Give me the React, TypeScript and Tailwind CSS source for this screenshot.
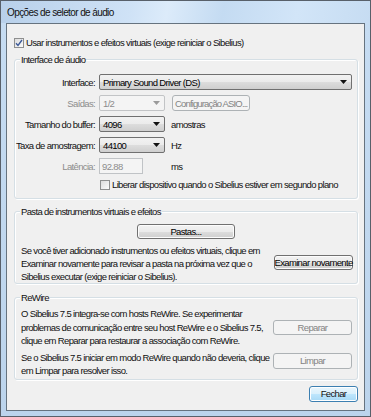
import React from "react";

const font = "font-['Liberation_Sans',Arial,sans-serif]";

const btn =
  "flex items-center justify-center whitespace-nowrap rounded-[3px] border border-[#707070] bg-[linear-gradient(#f2f2f2_0%,#ebebeb_50%,#dddddd_51%,#cfcfcf_100%)] shadow-[inset_0_0_0_1px_#fcfcfc] text-black";
const btnOff =
  "flex items-center justify-center whitespace-nowrap rounded-[3px] border border-[#adb2b5] bg-[#f4f4f4] text-[#838383]";

const Arrow = ({ off }: { off?: boolean }) => (
  <svg width="7" height="4" viewBox="0 0 7 4">
    <path d="M0 0h7L3.5 4z" fill={off ? "#9a9a9a" : "#111"} />
  </svg>
);

const Select = ({
  value,
  width,
  off,
}: {
  value: string;
  width: string;
  off?: boolean;
}) => (
  <div
    className={`flex h-[16px] items-center justify-between rounded-[2px] border pl-[3px] pr-[4px] ${width} ${
      off
        ? "border-[#c2c4c6] bg-[#f4f4f4] text-[#8d8d8d]"
        : "border-[#707070] bg-[linear-gradient(#f2f2f2_0%,#ebebeb_50%,#dddddd_51%,#cfcfcf_100%)] text-black"
    }`}
  >
    <span>{value}</span>
    <Arrow off={off} />
  </div>
);

const Check = ({ checked }: { checked?: boolean }) => (
  <div className="flex h-[10px] w-[10px] shrink-0 items-center justify-center border border-[#8e8f8f] bg-[linear-gradient(135deg,#dcdcdc,#fbfbfb)]">
    {checked && (
      <svg width="8" height="8" viewBox="0 0 8 8">
        <path d="M1 4.2l2 2.3L7 1" fill="none" stroke="#3d5a98" strokeWidth="1.4" />
      </svg>
    )}
  </div>
);

const Group = ({
  title,
  className,
  children,
}: {
  title: string;
  className: string;
  children: React.ReactNode;
}) => (
  <div
    className={`rounded-[3px] border border-[#d5dfe5] shadow-[inset_1px_1px_0_#fff,1px_1px_0_#fff] ${className}`}
  >
    <div className="-mt-[7px] ml-[5px] w-fit bg-[#f0f0f0] px-[1px] leading-[13px]">{title}</div>
    {children}
  </div>
);

const Row = ({ label, off, children }: { label: string; off?: boolean; children: React.ReactNode }) => (
  <div className="flex h-[16px] items-center gap-[4px]">
    <div className={`w-[80px] text-right ${off ? "text-[#8d8d8d]" : ""}`}>{label}</div>
    {children}
  </div>
);

export default function App() {
  return (
    <div
      className={`${font} flex h-[417px] w-[371px] flex-col whitespace-nowrap border border-[#58606a] bg-[#c3d9ef] text-[9.5px] leading-[13px] tracking-[-0.65px] text-[#111]`}
    >
      {/* title bar */}
      <div className="flex h-[22px] items-center bg-[linear-gradient(100deg,#b8d0ea_0%,#cfe2f6_35%,#dcebfa_45%,#c4dbf2_60%,#d2e5f8_80%,#c6dcf2_100%)] px-[6px] text-[10px] tracking-[-0.6px]">
        Opções de seletor de áudio
      </div>

      <div className="flex flex-1 flex-col bg-[linear-gradient(#c6dcf2,#bcd4ec)] px-[5px] pb-[5px]">
        <div className="flex flex-1 flex-col border border-[#66737f] bg-[#f0f0f0] pl-[7px] pr-[6px]">
          <div className="mt-[12px] flex h-[13px] items-center gap-[2px]">
            <Check checked />
            <span>Usar instrumentos e efeitos virtuais (exige reiniciar o Sibelius)</span>
          </div>

          <Group title="Interface de áudio" className="mt-[10px] pb-[7px]">
            <div className="mt-[8px] flex flex-col gap-[5px]">
              <Row label="Interface:">
                <Select value="Primary Sound Driver (DS)" width="w-[253px]" />
              </Row>
              <Row label="Saídas:" off>
                <Select value="1/2" width="w-[66px]" off />
                <div className={`${btnOff} ml-[3px] h-[16px] w-[78px] justify-start rounded-[2px] pl-[2px] tracking-[-0.85px]`}>
                  Configuração ASIO...
                </div>
              </Row>
              <Row label="Tamanho do buffer:">
                <Select value="4096" width="w-[66px]" />
                <span className="ml-[2px]">amostras</span>
              </Row>
              <Row label="Taxa de amostragem:">
                <Select value="44100" width="w-[66px]" />
                <span className="ml-[2px]">Hz</span>
              </Row>
              <Row label="Latência:" off>
                <div className="flex h-[16px] w-[44px] items-center border border-[#c0c3c6] bg-[#f4f4f4] pl-[2px] text-[#8d8d8d]">
                  92.88
                </div>
                <span className="ml-[24px]">ms</span>
              </Row>
            </div>
            <div className="mt-[4px] flex h-[13px] items-center gap-[2px] pl-[85px]">
              <Check />
              <span>Liberar dispositivo quando o Sibelius estiver em segundo plano</span>
            </div>
          </Group>

          <Group title="Pasta de instrumentos virtuais e efeitos" className="mt-[12px]">
            <div className={`${btn} mx-auto mt-[6px] h-[15px] w-[98px]`}>Pastas...</div>
            <div className="mt-[5px] flex items-center pl-[6px] pr-[4px]">
              <div className="flex-1 leading-[13px]">
                Se você tiver adicionado instrumentos ou efeitos virtuais, clique em
                <br />
                Examinar novamente para revisar a pasta na próxima vez que o
                <br />
                Sibelius executar (exige reiniciar o Sibelius).
              </div>
              <div className={`${btn} -mt-[3px] h-[15px] w-[79px]`}>Examinar novamente</div>
            </div>
          </Group>

          <Group title="ReWire" className="mt-[13px] pb-[1px]">
            <div className="mt-[3px] flex items-center pl-[6px] pr-[5px]">
              <div className="flex-1 leading-[13.5px]">
                O Sibelius 7.5 integra-se com hosts ReWire. Se experimentar
                <br />
                problemas de comunicação entre seu host ReWire e o Sibelius 7.5,
                <br />
                clique em Reparar para restaurar a associação com ReWire.
              </div>
              <div className={`${btnOff} h-[15px] w-[79px]`}>Reparar</div>
            </div>
            <div className="mt-[3px] flex items-start pl-[6px] pr-[5px]">
              <div className="flex-1 leading-[13.5px]">
                Se o Sibelius 7.5 iniciar em modo ReWire quando não deveria, clique
                <br />
                em Limpar para resolver isso.
              </div>
              <div className={`${btnOff} mt-[2px] h-[16px] w-[79px]`}>Limpar</div>
            </div>
          </Group>

          <div className="mt-[6px] flex justify-end">
            <div className="flex h-[16px] w-[49px] items-center justify-center rounded-[3px] border border-[#3c7fb1] bg-[linear-gradient(#eaf6fd_0%,#d9f0fc_50%,#bee6fd_51%,#a7d9f5_100%)] shadow-[inset_0_0_0_1px_#fff]">
              Fechar
            </div>
          </div>
        </div>
      </div>
    </div>
  );
}
